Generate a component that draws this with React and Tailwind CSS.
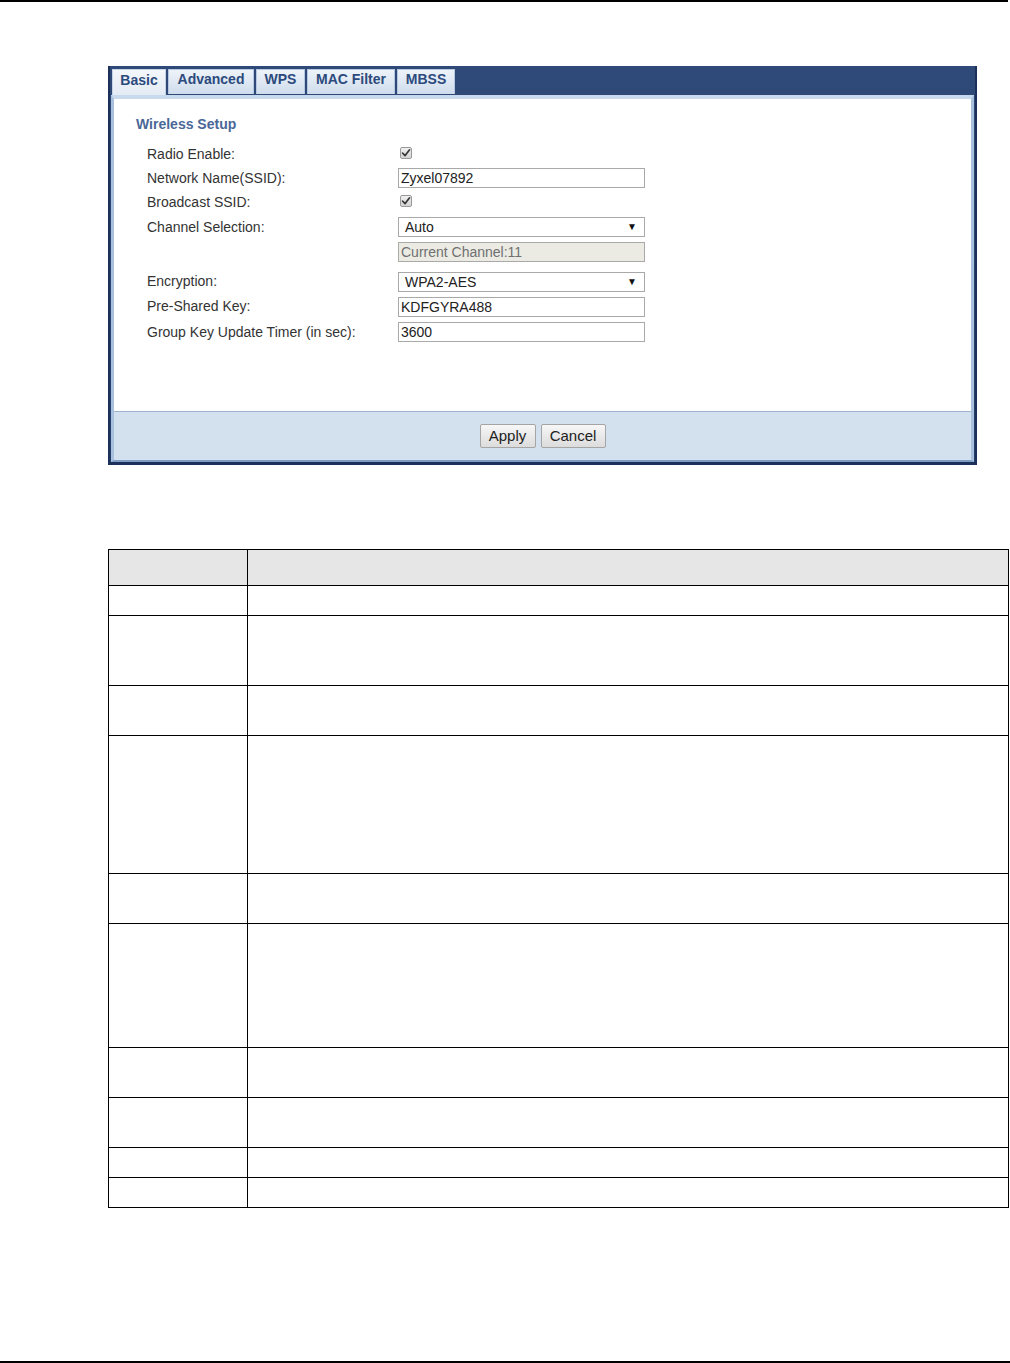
import React from 'react';

const font = { fontFamily: '"Liberation Sans", Arial, sans-serif' };

const tabs = [
  { label: 'Basic', w: 'w-[54px]', active: true },
  { label: 'Advanced', w: 'w-[86px]' },
  { label: 'WPS', w: 'w-[49px]' },
  { label: 'MAC Filter', w: 'w-[88px]' },
  { label: 'MBSS', w: 'w-[58px]' },
];

// table rows: heights only, cells are blank in the reference
const rowHeights = [30, 70, 50, 138, 50, 124, 50, 50, 30, 30];

const Check = () => (
  <div className="w-[12px] h-[12px] ml-[2px] border border-[#9a9a9a] bg-gradient-to-b from-[#f0f0f0] to-[#d4d4d4] rounded-[2px] flex items-center justify-center">
    <svg width="10" height="10" viewBox="0 0 10 10">
      <path d="M1.6 5.2 L4 7.6 L8.6 1.8" fill="none" stroke="#3a3a3a" strokeWidth="1.7" strokeLinecap="round" strokeLinejoin="round" />
    </svg>
  </div>
);

const TextInput = ({ value, disabled }) => (
  <div
    className={`w-[247px] h-[20px] border border-[#a9a9a9] px-[2px] flex items-center text-[14px] leading-none ${
      disabled ? 'bg-[#ebebe4] text-[#707070]' : 'bg-white text-[#222]'
    }`}
  >
    {value}
  </div>
);

const SelectBox = ({ value }) => (
  <div className="w-[247px] h-[20px] border border-[#a9a9a9] bg-white pl-[6px] pr-[7px] flex items-center justify-between text-[14px] leading-none text-[#222]">
    <span>{value}</span>
    <span className="text-[10px] text-[#111]">▼</span>
  </div>
);

const Row = ({ label, h, children }) => (
  <div className={`flex items-center ${h}`}>
    <div className="w-[251px] text-[14px] text-[#333]">{label}</div>
    <div>{children}</div>
  </div>
);

export default function App() {
  return (
    <div className="w-[1010px] h-[1363px] bg-white relative" style={font}>
      {/* page top rule */}
      <div className="h-[2px] w-[1008px] bg-black" />

      {/* screenshot frame */}
      <div className="ml-[108px] mt-[64px] w-[869px] h-[399px] bg-gradient-to-b from-[#2f4a78] to-[#263f69] border-x-2 border-b-[3px] border-[#1c3159] flex flex-col">
        {/* tab strip */}
        <div className="h-[29px] flex items-end gap-[2px] pl-[2px]">
          {tabs.map((t) =>
            t.active ? (
              <div
                key={t.label}
                className={`${t.w} h-[28px] -mb-[2px] bg-gradient-to-b from-[#f4f7fb] to-[#e2eaf4] border-t border-x border-[#c4d3e6] flex items-start justify-center pt-[2px] leading-[16px] text-[14px] font-bold text-[#2c4a7c]`}
              >
                {t.label}
              </div>
            ) : (
              <div
                key={t.label}
                className={`${t.w} h-[25px] mb-[1px] bg-gradient-to-b from-[#eef3f9] to-[#cfdcec] border-t border-x border-[#b6c8df] flex items-start justify-center pt-[1px] leading-[16px] text-[14px] font-bold text-[#2c4a7c]`}
              >
                {t.label}
              </div>
            )
          )}
        </div>

        {/* panel */}
        <div className="flex-1 mx-[1px] flex flex-col border-t-4 border-x-[3px] border-b-2 border-t-[#c9d9ed] border-x-[#a8bfdd] border-b-[#7f9cc5]">
          <div className="flex-1 bg-white pl-[22px] pt-[16px]">
            <div className="text-[14px] font-bold text-[#4a6897] leading-[18px]">Wireless Setup</div>
            <div className="pl-[11px] mt-[9px]">
              <Row label="Radio Enable:" h="h-[24px]">
                <div className="-mt-[2px]"><Check /></div>
              </Row>
              <Row label="Network Name(SSID):" h="h-[24px]">
                <TextInput value="Zyxel07892" />
              </Row>
              <Row label="Broadcast SSID:" h="h-[24px]">
                <div className="-mt-[2px]"><Check /></div>
              </Row>
              <Row label="Channel Selection:" h="h-[26px]">
                <SelectBox value="Auto" />
              </Row>
              <Row label="" h="h-[24px]">
                <TextInput value="Current Channel:11" disabled />
              </Row>
              <div className="h-[5px]" />
              <Row label="Encryption:" h="h-[25px]">
                <SelectBox value="WPA2-AES" />
              </Row>
              <Row label="Pre-Shared Key:" h="h-[25px]">
                <TextInput value="KDFGYRA488" />
              </Row>
              <Row label="Group Key Update Timer (in sec):" h="h-[26px]">
                <TextInput value="3600" />
              </Row>
            </div>
          </div>
          <div className="h-[49px] bg-[#d3e0ee] border-t border-[#9eb3cd] flex items-center justify-center gap-[5px]">
            <button className="w-[56px] h-[24px] border border-[#a5a5a5] rounded-[2px] bg-gradient-to-b from-[#f7f7f7] to-[#dcdcdc] text-[15px] text-[#222]">
              Apply
            </button>
            <button className="w-[65px] h-[24px] border border-[#a5a5a5] rounded-[2px] bg-gradient-to-b from-[#f7f7f7] to-[#dcdcdc] text-[15px] text-[#222]">
              Cancel
            </button>
          </div>
        </div>
      </div>

      {/* field description table */}
      <table className="ml-[108px] mt-[84px] w-[901px] border-collapse">
        <thead>
          <tr className="h-[36px] bg-[#e6e6e6]">
            <th className="w-[139px] border border-black" />
            <th className="border border-black" />
          </tr>
        </thead>
        <tbody>
          {rowHeights.map((h, i) => (
            <tr key={i} style={{ height: h }}>
              <td className="w-[139px] border border-black" />
              <td className="border border-black" />
            </tr>
          ))}
        </tbody>
      </table>

      {/* page bottom rule */}
      <div className="absolute left-0 top-[1361px] h-[2px] w-[1010px] bg-black" />
    </div>
  );
}
